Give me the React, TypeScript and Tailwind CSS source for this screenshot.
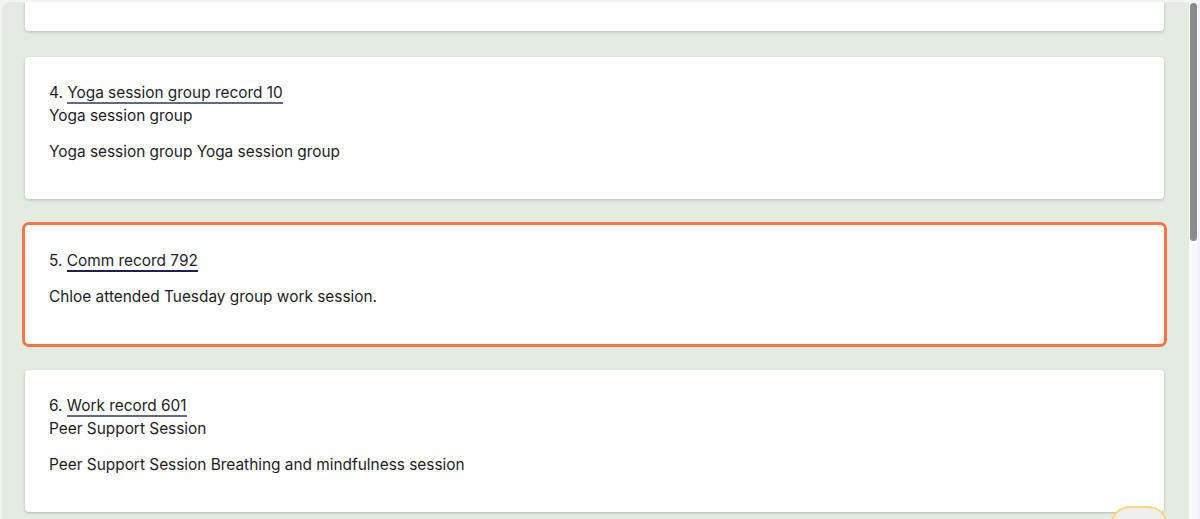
import { ReactNode } from 'react'

type Rec = {
  n: number
  title: string
  subtitle?: string
  body: string
  active?: boolean
}

const records: Rec[] = [
  { n: 4, title: 'Yoga session group record 10', subtitle: 'Yoga session group', body: 'Yoga session group Yoga session group' },
  { n: 5, title: 'Comm record 792', body: 'Chloe attended Tuesday group work session.', active: true },
  { n: 6, title: 'Work record 601', subtitle: 'Peer Support Session', body: 'Peer Support Session Breathing and mindfulness session' },
]

function Card({ children, active }: { children: ReactNode; active?: boolean }) {
  return (
    <div
      className={
        active
          ? 'bg-white rounded-[4px] shadow-[0_1px_3px_rgba(0,0,0,0.22)] outline-[3px] outline-solid outline-[#ff7447] px-6 pt-6 pb-9 shrink-0'
          : 'bg-white rounded-[4px] shadow-[0_1px_3px_rgba(0,0,0,0.22)] px-6 pt-6 pb-9 shrink-0'
      }
    >
      {children}
    </div>
  )
}

export default function App() {
  return (
    <div className="w-[1200px] h-[519px] overflow-hidden bg-[#f4f3f8] flex pt-[2px] pl-[2px] pr-[3px] font-['Inter',sans-serif] text-[15.4px] leading-[23px] text-[#1d1d1f]">
      <div className="flex-1 relative bg-[#e3ece1] rounded-tl-lg pl-[23px] pr-[25px] flex flex-col gap-[26px] overflow-hidden">
        {/* tail of the previous record */}
        <div className="h-[29px] shrink-0 bg-white rounded-b-[4px] shadow-[0_1px_3px_rgba(0,0,0,0.22)]"></div>

        {records.map((r) => (
          <Card key={r.n} active={r.active}>
            <div>
              {r.n}.{' '}
              <span
                className={
                  r.active
                    ? 'border-b-2 border-[#1c1f5c]'
                    : 'border-b-2 border-[#5d6b85]'
                }
              >
                {r.title}
              </span>
            </div>
            {r.subtitle && <div>{r.subtitle}</div>}
            <p className="mt-[13px]">{r.body}</p>
          </Card>
        ))}

        {/* floating button peeking from the bottom */}
        <div className="absolute left-[1108px] top-[504px] w-[58px] h-[40px] rounded-full bg-[#efefef] border-2 border-[#fdd57f]"></div>
      </div>

      {/* scrollbar */}
      <div className="w-2 bg-[#fafafa] rounded-tr-md pt-px flex justify-center">
        <div className="w-[7px] h-[238px] rounded-full bg-[#8b8b8b]"></div>
      </div>
    </div>
  )
}
